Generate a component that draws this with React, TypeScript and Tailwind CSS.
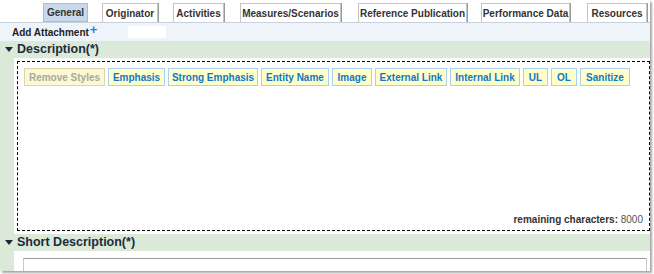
import React from 'react';

const tabs = [
  { label: 'General', cls: 'w-[45px] ml-[43px]', active: true },
  { label: 'Originator', cls: 'w-[56px] ml-[14px]' },
  { label: 'Activities', cls: 'w-[51px] ml-[15px]' },
  { label: 'Measures/Scenarios', cls: 'w-[101px] ml-[16px]' },
  { label: 'Reference Publication', cls: 'w-[109px] ml-[17px]' },
  { label: 'Performance Data', cls: 'w-[89px] ml-[14px]' },
  { label: 'Resources', cls: 'w-[60px] ml-[17px]' },
];

const tools = [
  { label: 'Remove Styles', w: 'w-[81px]', off: true },
  { label: 'Emphasis', w: 'w-[57px]' },
  { label: 'Strong Emphasis', w: 'w-[90px]' },
  { label: 'Entity Name', w: 'w-[68px]' },
  { label: 'Image', w: 'w-[40px]' },
  { label: 'External Link', w: 'w-[72px]' },
  { label: 'Internal Link', w: 'w-[70px]' },
  { label: 'UL', w: 'w-[25px]' },
  { label: 'OL', w: 'w-[26px]' },
  { label: 'Sanitize', w: 'w-[50px]' },
];

function SectionHeader({ title }: { title: string }) {
  return (
    <div className="h-[17px] bg-[#dbe9d9] flex items-center pl-[5px] gap-[4px]">
      <svg width="8" height="6" viewBox="0 0 8 6" className="mt-[1px]">
        <path d="M0 0 L8 0 L4 5 Z" fill="#1b2838" />
      </svg>
      <span className="text-[12.5px] font-bold text-[#1b2b3c] leading-none">{title}</span>
    </div>
  );
}

export default function App() {
  return (
    <div className="w-[654px] h-[274px] bg-white overflow-hidden font-['Liberation_Sans',Arial,sans-serif]">
      <div className="w-[650px] h-[271px] bg-white shadow-[2px_2px_2px_rgba(0,0,0,0.35)] overflow-hidden">
        {/* tab strip */}
        <div className="h-[22px] flex items-end">
          {tabs.map((t) => (
            <div
              key={t.label}
              className={`${t.cls} shrink-0 h-[19px] flex items-center justify-center whitespace-nowrap text-[10px] font-bold text-[#333] border ${
                t.active
                  ? 'bg-[#c8d9ee] border-[#a9bdd6]'
                  : 'bg-white border-[#c4c4c4] border-b-0 shadow-[1px_0_0_#999]'
              }`}
            >
              {t.label}
            </div>
          ))}
        </div>

        {/* attachment bar */}
        <div className="h-[19px] bg-[#eff3fa] border-t border-[#c9d1dd] flex items-center pl-[12px]">
          <span className="text-[10px] font-bold text-[#222]">Add Attachment</span>
          <span className="text-[13px] font-bold text-[#1e88d8] leading-none -mt-[6px] ml-[1px]">+</span>
          <div className="w-[38px] h-[12px] bg-white ml-[31px]" />
        </div>

        {/* description */}
        <SectionHeader title="Description(*)" />
        <div className="flex">
          <div className="w-[14px] bg-[#dbe9d9]" />
          <div className="flex-1 pl-[3px] pt-[3px] pb-[3px]">
            <div className="h-[170px] border border-dashed border-black flex flex-col px-[6px] pt-[6px] pb-[3px]">
              <div className="flex gap-[3px]">
                {tools.map((t) => (
                  <div
                    key={t.label}
                    className={`${t.w} shrink-0 h-[18px] flex items-center justify-center whitespace-nowrap text-[10px] font-bold border ${
                      t.off
                        ? 'bg-[#fcf8d4] border-[#ddd6a8] text-[#a9a9a0]'
                        : 'bg-[#ffffcc] border-[#a9d0ef] text-[#0f77c9]'
                    }`}
                  >
                    {t.label}
                  </div>
                ))}
              </div>
              <div className="flex-1" />
              <div className="text-right text-[10px] text-[#333]">
                <span className="font-bold">remaining characters:</span> <span className="text-[#555]">8000</span>
              </div>
            </div>
          </div>
        </div>

        {/* short description */}
        <SectionHeader title="Short Description(*)" />
        <div className="flex">
          <div className="w-[14px] bg-[#dbe9d9]" />
          <div className="flex-1 pl-[9px] pr-[3px] pt-[7px]">
            <div className="h-[20px] border border-[#c8c8c8] border-t-[#9a9a9a] bg-white" />
          </div>
        </div>
      </div>
    </div>
  );
}
